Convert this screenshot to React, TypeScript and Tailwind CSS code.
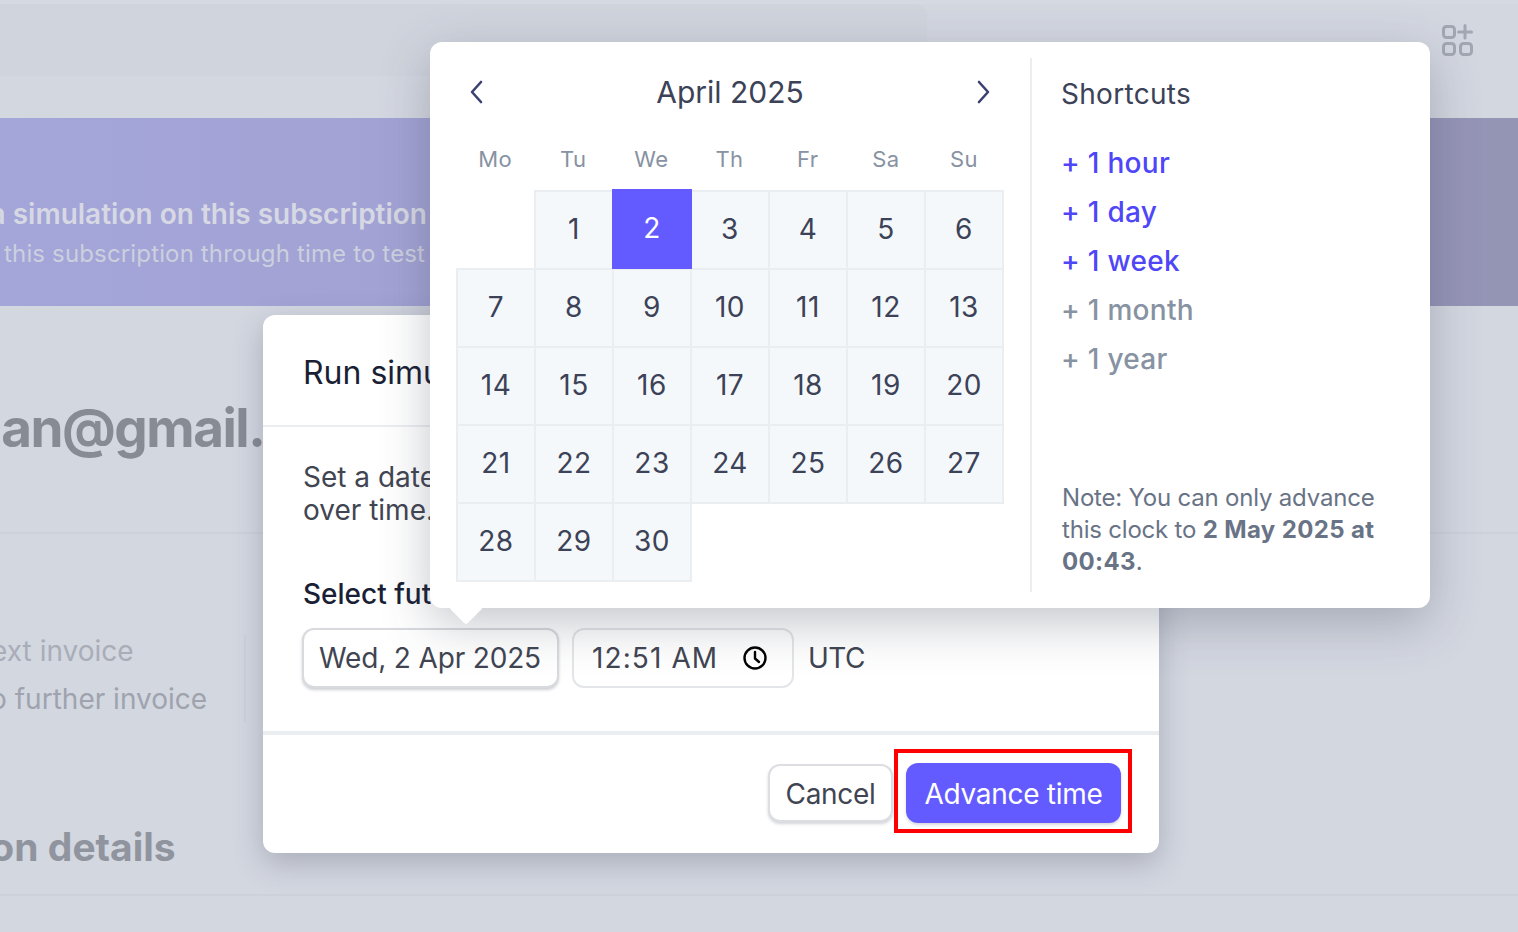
const weekdays = ['Mo', 'Tu', 'We', 'Th', 'Fr', 'Sa', 'Su'];
const days = Array.from({ length: 30 }, (_, i) => i + 1);
const shortcuts = [
  { label: '1 hour', active: true },
  { label: '1 day', active: true },
  { label: '1 week', active: true },
  { label: '1 month', active: false },
  { label: '1 year', active: false },
];

function Chevron({ dir }: { dir: 'left' | 'right' }) {
  return (
    <svg width="16" height="24" viewBox="0 0 16 24" fill="none" stroke="#3c4270" strokeWidth="2.6" strokeLinecap="round" strokeLinejoin="round">
      <path d={dir === 'left' ? 'M12 2 L3 12 L12 22' : 'M4 2 L13 12 L4 22'} />
    </svg>
  );
}

function Background() {
  return (
    <div className="h-full w-full">
      <div className="h-[4px] bg-[#d5d9e2]" />
      <div className="flex h-[72px]">
        <div className="h-full w-[927px] rounded-r-xl bg-[#d0d4dd]" />
      </div>
      <div className="h-[42px] bg-[#d3d7e0]" />
      <div className="h-[188px] overflow-hidden bg-[linear-gradient(90deg,#a4a5d9_0%,#a2a2d4_28%,#9e9ccb_60%,#9494b5_100%)] pt-[80px]">
        <div className="-ml-[70px] whitespace-nowrap text-[28px] leading-[32px] font-semibold text-[#d6d9e3]">Run a simulation on this subscription</div>
        <div className="-ml-[104px] mt-[8px] whitespace-nowrap text-[24px] leading-[32px] tracking-[0.15px] text-[#ccd0de]">Advance this subscription through time to test</div>
      </div>
      <div className="h-[228px] overflow-hidden border-b-2 border-[#cdd1da] pt-[90px]">
        <div className="-ml-[153px] whitespace-nowrap text-[53px] leading-[64px] font-bold tracking-[-1.5px] text-[#868b94]">jonathan@gmail.com</div>
      </div>
      <div className="flex h-[188px] pt-[101px]">
        <div className="flex h-[87px] w-[246px] flex-col gap-[16px] overflow-hidden border-r-2 border-[#cdd1da] text-[28px] leading-[32px] whitespace-nowrap text-[#a5a9b4]">
          <div className="-ml-[30px] text-[#a9adb8]">Next invoice</div>
          <div className="-ml-[31px] text-[#9fa3ae]">No further invoice</div>
        </div>
      </div>
      <div className="h-[174px] overflow-hidden border-b-2 border-[#cdd1da] pt-[101px]">
        <div className="-ml-[205px] whitespace-nowrap text-[39px] leading-[48px] font-bold text-[#90949e]">Subscription details</div>
      </div>
    </div>
  );
}

function Dialog() {
  return (
    <div className="absolute top-[315px] left-[263px] flex h-[538px] w-[896px] flex-col overflow-hidden rounded-xl bg-white shadow-[0_10px_30px_rgba(60,66,87,0.28)]">
      <div className="flex h-[112px] items-center border-b-2 border-[#ebeef1] px-[40px] pt-[6px]">
        <div className="text-[32px] leading-[40px] font-normal text-[#1a1f36]">Run simulation</div>
      </div>
      <div className="flex-1 px-[40px] pt-[34px]">
        <div className="text-[28px] leading-[33px] text-[#414552]">
          Set a date to advance this subscription
          <br />
          over time.
        </div>
        <div className="mt-[47px] text-[28px] leading-[40px] font-medium text-[#1a1f36]">Select future date</div>
        <div className="mt-[14px] flex items-center">
          <div className="ml-[-1px] flex h-[60px] w-[257px] items-center rounded-xl border-2 border-[#d8dade] bg-white pl-[15px] text-[28px] tracking-[-0.15px] whitespace-nowrap text-[#414552] shadow-[0_2px_3px_rgba(60,66,87,0.25)]">
            Wed, 2 Apr 2025
          </div>
          <div className="ml-[13px] flex h-[60px] w-[222px] items-center rounded-xl border-2 border-[#e3e5e8] pl-[18px] text-[28px] whitespace-nowrap text-[#414552]">
            <span className="tracking-[1.1px]">12:51 AM</span>
            <svg className="ml-[24px]" width="26" height="26" viewBox="0 0 26 26" fill="none" stroke="#000000" strokeWidth="2.4" strokeLinecap="round" strokeLinejoin="round">
              <circle cx="13" cy="13" r="10.5" />
              <path d="M13 7 V13.5 L17 17" />
            </svg>
          </div>
          <div className="ml-[14px] text-[28px] tracking-[-0.5px] text-[#414552]">UTC</div>
        </div>
      </div>
      <div className="flex h-[122px] items-center justify-end gap-[13px] border-t-4 border-[#ebeef1] pr-[38px] pb-[2px]">
        <button className="h-[58px] w-[125px] rounded-xl border-2 border-[#dcdee2] bg-white pt-[2px] text-[28px] tracking-[-0.3px] text-[#414552] shadow-[0_2px_3px_rgba(60,66,87,0.22)]">Cancel</button>
        <div className="relative">
          <button className="h-[60px] w-[215px] rounded-xl bg-[#635bff] pt-[2px] text-[28px] tracking-[-0.3px] text-white shadow-[0_2px_3px_rgba(60,66,87,0.2)]">Advance time</button>
          <div className="absolute -top-[14px] -right-[11px] -bottom-[10px] -left-[12px] border-[4px] border-[#fe0000]" />
        </div>
      </div>
    </div>
  );
}

function Calendar() {
  return (
    <div className="w-[600px] pl-[26px]">
      <div className="flex h-[68px] w-[547px] items-center justify-between pr-[12px] pl-[13px]">
        <Chevron dir="left" />
        <div className="text-[30px] leading-[36px] text-[#3c4257]">April 2025</div>
        <Chevron dir="right" />
      </div>
      <div className="mt-[15px] grid w-[547px] grid-cols-7">
        {weekdays.map((d) => (
          <div key={d} className="h-[36px] text-center text-[22px] leading-[36px] tracking-[0.4px] text-[#8792a2]">{d}</div>
        ))}
      </div>
      <div className="mt-[13px] grid w-[548px] grid-cols-[repeat(7,78px)] grid-rows-[repeat(5,78px)]">
        <div />
        {days.map((d) => (
          <div
            key={d}
            className={
              d === 2
                ? 'z-10 -my-[1px] -mr-[2px] flex items-center justify-center bg-[#635bff] pb-[2px] text-[28px] tracking-[0.5px] text-white'
                : '-mr-[2px] -mb-[2px] flex items-center justify-center border-2 border-[#ebeef1] bg-[#f5f8fa] pb-[2px] text-[28px] tracking-[0.5px] text-[#3c4257]'
            }
          >
            {d}
          </div>
        ))}
      </div>
    </div>
  );
}

function Shortcuts() {
  return (
    <div className="flex flex-1 flex-col justify-between border-l-2 border-[#ebeef1] pt-[18px] pl-[29px]">
      <div>
        <div className="text-[28px] leading-[36px] tracking-[0.3px] text-[#3c4257]">Shortcuts</div>
        <div className="mt-[31px] flex flex-col gap-[9px]">
          {shortcuts.map((s) => (
            <div key={s.label} className={s.active ? 'text-[28px] leading-[40px] font-[550] tracking-[0.3px] text-[#4f46f8]' : 'text-[28px] leading-[40px] font-[550] tracking-[0.3px] text-[#8792a2]'}>
              + {s.label}
            </div>
          ))}
        </div>
      </div>
      <div className="mb-[14px] ml-[1px] w-[340px] text-[24px] leading-[32px] tracking-[-0.2px] text-[#697386]">
        Note: You can only advance this clock to <span className="font-bold tracking-[0.35px]">2 May 2025 at 00:43</span>.
      </div>
    </div>
  );
}

function Popover() {
  return (
    <div className="absolute top-[42px] left-[430px] h-[566px] w-[1000px] rounded-xl bg-white shadow-[0_15px_50px_rgba(60,66,87,0.3)]">
      <div className="flex h-full pt-[16px] pb-[16px]">
        <Calendar />
        <Shortcuts />
      </div>
      <div className="absolute top-[554px] left-[24px] h-[24px] w-[24px] rotate-45 rounded-[3px] bg-white" />
    </div>
  );
}

export default function App() {
  return (
    <div className="relative h-[932px] w-[1518px] overflow-hidden bg-[#d3d7e0] font-['Inter',sans-serif]">
      <Background />
      <svg className="absolute top-[24px] left-[1440px]" width="34" height="34" viewBox="0 0 34 34" fill="none" stroke="#a3a7b2" strokeWidth="3" strokeLinecap="round">
        <rect x="3.5" y="2.5" width="11" height="11" rx="3" />
        <path d="M25 1.5 V14 M18.5 8 H31.5" />
        <rect x="3.5" y="19.5" width="11" height="11" rx="3" />
        <rect x="20.5" y="19.5" width="11" height="11" rx="3" />
      </svg>
      <Dialog />
      <Popover />
    </div>
  );
}
